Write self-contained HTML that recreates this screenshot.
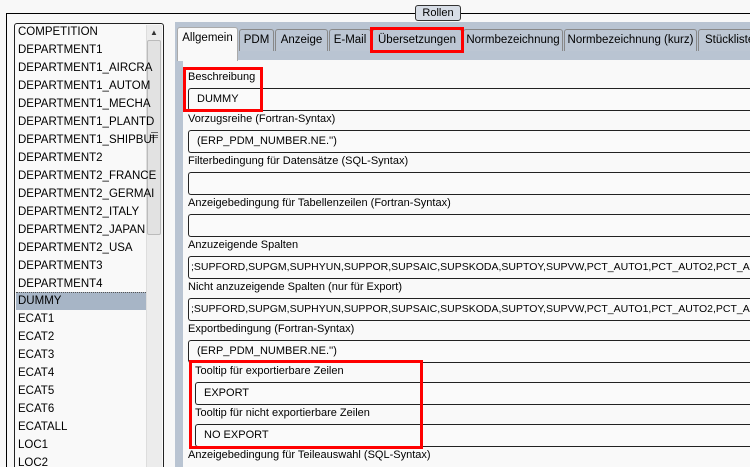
<!DOCTYPE html>
<html style="overflow:hidden;width:750px;height:467px"><head><style>
*{box-sizing:border-box}
html,body{overflow:hidden}
body{margin:0;width:750px;height:467px;background:#f8f8f8;font-family:"Liberation Sans","DejaVu Sans",sans-serif;font-size:11px;color:#000;position:relative}
.abs{position:absolute}
.row{position:absolute;left:18px;height:18px;line-height:18px;white-space:nowrap;font-size:11.5px}
.lab{position:absolute;left:188px;font-size:11px;white-space:nowrap}
.inp{position:absolute;left:188px;width:570px;height:23px;border:1px solid #222;border-right:none;border-radius:3px 0 0 3px;background:#fafafa;padding-left:8px;line-height:21px;font-size:11px;white-space:nowrap;overflow:hidden}
.tab{position:absolute;top:29px;height:22px;border:1px solid #888;border-bottom:none;background:#bcc6d3;line-height:21px;text-align:center;font-size:11.5px;border-radius:3px 3px 0 0;white-space:nowrap;overflow:hidden}
.red{position:absolute;border:3px solid #f00}
</style></head><body>
<div class="abs" style="left:6px;top:13px;width:744px;height:454px;border-left:1px solid #000;border-top:1px solid #000"></div>
<div class="abs" style="left:415px;top:5px;width:46px;height:16px;border:1px solid #333;border-radius:3px;background:#d7dde6;text-align:center;line-height:14px;font-size:11px">Rollen</div>
<!-- list -->
<div class="abs" style="left:14px;top:23px;width:150px;height:450px;border:1px solid #222;border-radius:3px;background:#f9f9f9"></div>
<div class="abs" style="left:146px;top:25px;width:16px;height:442px;background:#ececec;border-left:1px solid #ddd"></div>
<div class="abs" style="left:147px;top:40px;width:14px;height:195px;background:#e2e2e2;border:1px solid #bbb;border-radius:2px"></div>
<div class="abs" style="left:150px;top:28px;font-size:8px;color:#333">▲</div>
<div class="abs" style="left:151px;top:132px;width:7px;height:6px;border-top:1px solid #666;border-bottom:1px solid #666"></div>
<div class="abs" style="left:151px;top:135px;width:7px;height:1px;background:#666"></div>
<div class="abs" style="left:16px;top:292px;width:130px;height:18px;background:#a7b5c6;border-top:1px dotted #555"></div>
<div class="row" style="top:23px">COMPETITION</div>
<div class="row" style="top:41px">DEPARTMENT1</div>
<div class="row" style="top:59px">DEPARTMENT1_AIRCRA</div>
<div class="row" style="top:77px">DEPARTMENT1_AUTOM</div>
<div class="row" style="top:95px">DEPARTMENT1_MECHA</div>
<div class="row" style="top:113px">DEPARTMENT1_PLANTD</div>
<div class="row" style="top:131px">DEPARTMENT1_SHIPBUI</div>
<div class="row" style="top:149px">DEPARTMENT2</div>
<div class="row" style="top:167px">DEPARTMENT2_FRANCE</div>
<div class="row" style="top:185px">DEPARTMENT2_GERMAI</div>
<div class="row" style="top:203px">DEPARTMENT2_ITALY</div>
<div class="row" style="top:221px">DEPARTMENT2_JAPAN</div>
<div class="row" style="top:239px">DEPARTMENT2_USA</div>
<div class="row" style="top:257px">DEPARTMENT3</div>
<div class="row" style="top:275px">DEPARTMENT4</div>
<div class="row" style="top:292px">DUMMY</div>
<div class="row" style="top:310px">ECAT1</div>
<div class="row" style="top:328px">ECAT2</div>
<div class="row" style="top:346px">ECAT3</div>
<div class="row" style="top:364px">ECAT4</div>
<div class="row" style="top:382px">ECAT5</div>
<div class="row" style="top:400px">ECAT6</div>
<div class="row" style="top:418px">ECATALL</div>
<div class="row" style="top:436px">LOC1</div>
<div class="row" style="top:454px">LOC2</div>
<!-- right panel -->
<div class="abs" style="left:175px;top:22px;width:575px;height:445px;background:#b9c4d2"></div>
<div class="abs" style="left:183px;top:60px;width:567px;height:407px;background:#f9f9f9"></div>
<div class="tab" style="left:177px;top:27px;width:61px;height:34px;background:#f9f9f9;border-color:#aaa">Allgemein</div>
<div class="tab" style="left:239px;width:35px">PDM</div>
<div class="tab" style="left:275px;width:53px">Anzeige</div>
<div class="tab" style="left:329px;width:42px">E-Mail</div>
<div class="tab" style="left:372px;width:90px">Übersetzungen</div>
<div class="tab" style="left:463px;width:100px">Normbezeichnung</div>
<div class="tab" style="left:564px;width:133px">Normbezeichnung (kurz)</div>
<div class="tab" style="left:698px;width:60px;text-align:left;padding-left:6px">Stückliste</div>
<div class="lab" style="top:71px">Beschreibung</div>
<div class="inp" style="top:88px">DUMMY</div>
<div class="lab" style="top:113px">Vorzugsreihe (Fortran-Syntax)</div>
<div class="inp" style="top:130px">(ERP_PDM_NUMBER.NE.'')</div>
<div class="lab" style="top:155px">Filterbedingung für Datensätze (SQL-Syntax)</div>
<div class="inp" style="top:172px"></div>
<div class="lab" style="top:197px">Anzeigebedingung für Tabellenzeilen (Fortran-Syntax)</div>
<div class="inp" style="top:214px"></div>
<div class="lab" style="top:239px">Anzuzeigende Spalten</div>
<div class="inp" style="top:256px;padding-left:2px;font-size:10.5px">;SUPFORD,SUPGM,SUPHYUN,SUPPOR,SUPSAIC,SUPSKODA,SUPTOY,SUPVW,PCT_AUTO1,PCT_AUTO2,PCT_AUTO3,</div>
<div class="lab" style="top:281px">Nicht anzuzeigende Spalten (nur für Export)</div>
<div class="inp" style="top:298px;padding-left:2px;font-size:10.5px">;SUPFORD,SUPGM,SUPHYUN,SUPPOR,SUPSAIC,SUPSKODA,SUPTOY,SUPVW,PCT_AUTO1,PCT_AUTO2,PCT_AUTO3,</div>
<div class="lab" style="top:323px">Exportbedingung (Fortran-Syntax)</div>
<div class="inp" style="top:340px">(ERP_PDM_NUMBER.NE.'')</div>
<div class="lab" style="top:365px;left:195px">Tooltip für exportierbare Zeilen</div>
<div class="inp" style="top:382px;left:195px;width:560px">EXPORT</div>
<div class="lab" style="top:407px;left:195px">Tooltip für nicht exportierbare Zeilen</div>
<div class="inp" style="top:424px;left:195px;width:560px">NO EXPORT</div>
<div class="lab" style="top:449px">Anzeigebedingung für Teileauswahl (SQL-Syntax)</div>
<div class="red" style="left:183px;top:67px;width:80px;height:45px"></div>
<div class="red" style="left:370px;top:27px;width:94px;height:26px"></div>
<div class="red" style="left:189px;top:360px;width:234px;height:89px"></div>
</body></html>
